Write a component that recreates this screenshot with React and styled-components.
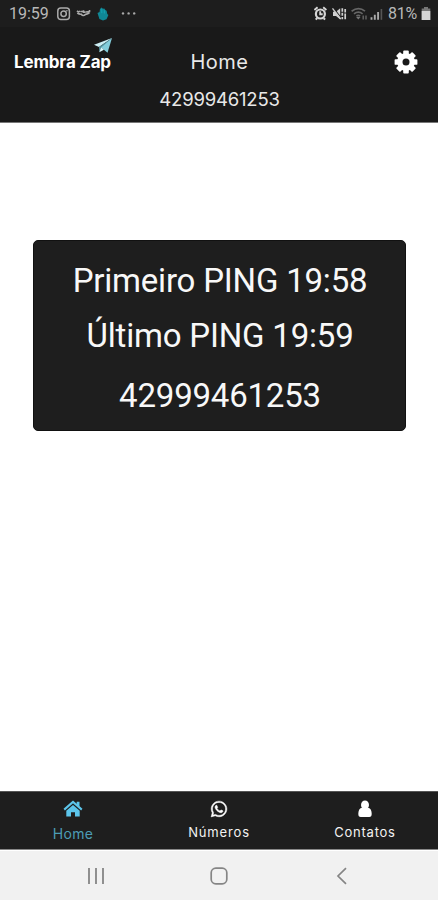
import React from 'react'

// Styling and Icons
import styled, { createGlobalStyle } from 'styled-components'
import { FaWhatsapp } from 'react-icons/fa'

const tabs = [
  { name: 'Home', icon: <HomeIcon />, active: true, spacing: '0.35px' },
  { name: 'Números', icon: <FaWhatsapp size={18} strokeWidth="14" stroke="#fff" />, spacing: '0.85px' },
  { name: 'Contatos', icon: <UserIcon />, spacing: '0.75px' },
]

const App = () => {
  return (
    <>
      <GlobalStyle />
      <Screen>
        <StatusBar>
          <Clock>19:59</Clock>
          <Notifications />
          <System>
            <SystemIcons />
            <span>81%</span>
            <BatteryIcon />
          </System>
        </StatusBar>
        <Header>
          <TitleRow>
            <Logo>
              <PlaneIcon />
              <LogoText>Lembra Zap</LogoText>
            </Logo>
            <Title>Home</Title>
            <Settings>
              <GearIcon />
            </Settings>
          </TitleRow>
          <Phone>42999461253</Phone>
        </Header>
        <Content>
          <Card>
            <PingLine $height="55px">Primeiro PING 19:58</PingLine>
            <PingLine $height="55px">Último PING 19:59</PingLine>
            <PingLine $height="66px">42999461253</PingLine>
          </Card>
        </Content>
        <TabBar>
          {tabs.map((tab) => (
            <Tab key={tab.name} $active={tab.active}>
              <TabIcon>{tab.icon}</TabIcon>
              <TabLabel $active={tab.active} $spacing={tab.spacing}>
                {tab.name}
              </TabLabel>
            </Tab>
          ))}
        </TabBar>
        <SystemNav>
          <svg width="18" height="18" viewBox="0 0 18 18" stroke="#858585" strokeWidth="1.8">
            <path d="M2 1v16M9 1v16M16 1v16" />
          </svg>
          <svg width="18" height="18" viewBox="0 0 18 18" fill="none" stroke="#858585" strokeWidth="1.7">
            <rect x="1.2" y="1.2" width="15.6" height="15.6" rx="4.6" />
          </svg>
          <svg width="18" height="18" viewBox="0 0 18 18" fill="none" stroke="#858585" strokeWidth="1.7">
            <path d="M13 1.2L5 9l8 7.8" />
          </svg>
        </SystemNav>
      </Screen>
    </>
  )
}

// Instagram, cap, hand and the overflow dots
const Notifications = () => (
  <svg width="84" height="16" viewBox="0 0 84 16" fill="none">
    <g stroke="#aaa" strokeWidth="1.5">
      <rect x="1.8" y="2" width="11.6" height="11.6" rx="3" />
      <circle cx="7.6" cy="7.8" r="2.7" />
    </g>
    <circle cx="10.9" cy="4.7" r="0.8" fill="#aaa" />
    <path
      d="M21 4.9q1.4 1.5 3.2.3M24.6 5.5h2.2M27.5 4.3v1.8h2.2M30 6l3.5-.5V4.1M21.3 7q2 1.4 4 1.2 1.8 2.5 4.2.2 2.5-.4 4-1.8"
      stroke="#aaa"
      strokeWidth="1.6"
    />
    <path d="M41.5 7l2-.9.5-3.1 1.6-1.4 1.3 1.2 1.4-.2 1 1.5 1.3.6.7 3.3 1.1.9-1.9 4.4-3.5 1.3-3.6-1.5z" fill="#108795" />
    <path d="M45.8 3.2v4M48.3 4.2v3.3" stroke="#14a5b4" strokeWidth="1" />
    <g fill="#aaa">
      <circle cx="67" cy="7.4" r="1.2" />
      <circle cx="72.6" cy="7.4" r="1.2" />
      <circle cx="78.2" cy="7.4" r="1.2" />
    </g>
  </svg>
)

// Alarm, muted sound, wifi and signal
const SystemIcons = () => (
  <svg width="72" height="16" viewBox="0 0 72 16" fill="none">
    <circle cx="6.4" cy="8" r="4.5" stroke="#d5d5d5" strokeWidth="2.2" />
    <path
      d="M.4 3.9l3.2-2.7M12.4 3.9L9.2 1.2M1.6 13.6l1.7-1.4M11.2 13.6l-1.7-1.4M6.2 5.3v3h2.5"
      stroke="#d5d5d5"
      strokeWidth="1.9"
    />
    <path d="M19 5.8h3l4.2-3.6v11.2L22 10h-3z" fill="#cfcfcf" />
    <path d="M19.4 1.9l8.2 10.6" stroke="#1d1d1d" strokeWidth="1.2" />
    <path d="M18.5 2.4l8.2 10.6" stroke="#cfcfcf" strokeWidth="1.3" />
    <path d="M28.3 2.2v3.5M28.3 6.8v3M28.3 11v2.2M31.2 3v3.5M31.2 7.6v5.6" stroke="#cfcfcf" strokeWidth="1.7" />
    <path d="M37.6 5.2q7-5.2 13.4 0M40 7.8q4.3-3.3 8.6 0M42.4 10.2q1.9-1.5 3.8 0" stroke="#666" strokeWidth="1.7" />
    <path d="M44.3 13.4l-2.2-2.4h4.4z" fill="#777" />
    <path d="M49.2 13.5V9.5M52 9.5v4" stroke="#666" strokeWidth="1.4" />
    <path d="M57.5 11.2v2.6M60.8 8.8v5M64.1 6.1v7.7" stroke="#aaa" strokeWidth="1.9" />
    <path d="M67.4 3v10.8" stroke="#555" strokeWidth="1.6" />
  </svg>
)

const BatteryIcon = () => (
  <svg width="10" height="15" viewBox="0 0 10 15">
    <path d="M3 1h4v1.6h2.3V14H.7V2.6H3z" fill="#777" />
    <path d="M.7 5h8.6v9H.7z" fill="#d5d5d5" />
  </svg>
)

const PlaneIcon = () => (
  <Plane width="20" height="17" viewBox="0 0 20 17">
    <path d="M19 1L1 7.7l5 2.3z" fill="#cdeff5" />
    <path d="M19 1L6 10l.3 5z" fill="#54929d" />
    <path d="M19 1L8.2 10.5l6.3 5.3z" fill="#83cddb" />
    <path d="M6.3 15.2l1.9-4.7 2.8 2.2z" fill="#d9f5f7" />
  </Plane>
)

const GearIcon = () => (
  <svg width="24" height="24" viewBox="0 0 24 24" fill="#fff">
    {[0, 45, 90, 135].map((angle) => (
      <rect key={angle} x="9.2" y="0.6" width="5.6" height="22.8" rx="0.9" transform={`rotate(${angle} 12 12)`} />
    ))}
    <circle cx="12" cy="12" r="8.9" />
    <circle cx="12" cy="12" r="3.5" fill="#191919" />
  </svg>
)

function HomeIcon() {
  return (
    <svg width="20" height="18" viewBox="0 0 20 18">
      <path d="M1.2 9.6L10 2l8.8 7.6" fill="none" stroke="currentColor" strokeWidth="2.1" />
      <path d="M13.7 1.7h2.8v5.4l-2.8-2.4z" fill="currentColor" />
      <path d="M10 5l6.7 5.7v5.8H12v-4.2H8v4.2H3.3v-5.8z" fill="currentColor" />
    </svg>
  )
}

function UserIcon() {
  return (
    <svg width="14" height="18" viewBox="0 0 14 18" fill="#fff">
      <ellipse cx="7" cy="4.9" rx="4" ry="4.3" />
      <path d="M3.6 7.7H10.4Q13.7 8.8 13.7 14q0 3-2.4 3H2.7Q.3 17 .3 14q0-5.2 3.3-6.3z" />
    </svg>
  )
}

const GlobalStyle = createGlobalStyle`
  * {
    box-sizing: border-box;
    margin: 0;
    padding: 0;
  }
  body {
    background: #fff;
  }
  svg {
    display: block;
    flex-shrink: 0;
  }
`

const Screen = styled.div`
  width: 438px;
  height: 900px;
  display: flex;
  flex-direction: column;
  overflow: hidden;
  font-family: Inter, sans-serif;
`

const StatusBar = styled.div`
  height: 27px;
  padding: 0 7px 0 9px;
  display: flex;
  align-items: center;
  background: #1d1d1d;
  color: #b8b8b8;
  font-family: Roboto, sans-serif;
  font-size: 16px;
  line-height: 27px;
`

const Clock = styled.span`
  width: 47px;
`

const System = styled.div`
  margin-left: auto;
  display: flex;
  align-items: center;
  gap: 2px;

  span {
    width: 31px;
    letter-spacing: -0.2px;
  }
`

const Header = styled.div`
  height: 96px;
  background: #191919;
  border-bottom: 1px solid #777;
  color: #e8e8e8;
`

const TitleRow = styled.div`
  height: 60px;
  padding: 10px 20px 0 14px;
  display: grid;
  grid-template-columns: 100px 1fr 100px;
`

const Logo = styled.div`
  display: flex;
  flex-direction: column;
`

const Plane = styled.svg`
  margin-left: 79px;
`

const LogoText = styled.span`
  margin-top: -3px;
  color: #fff;
  font-size: 17px;
  font-weight: 700;
  line-height: 22px;
  letter-spacing: -0.15px;
  white-space: nowrap;
`

const Title = styled.h1`
  padding-left: 7px;
  font-size: 20px;
  font-weight: 400;
  line-height: 50px;
  letter-spacing: 0.5px;
  text-align: center;
`

const Settings = styled.div`
  display: flex;
  justify-content: flex-end;
  padding-top: 13px;
`

const Phone = styled.p`
  padding-left: 1px;
  font-size: 18.5px;
  line-height: 25px;
  letter-spacing: -0.2px;
  text-align: center;
`

const Content = styled.div`
  flex: 1;
  padding: 117px 32px 0 33px;
`

const Card = styled.div`
  height: 191px;
  padding-top: 12px;
  border: 1px solid #111;
  border-radius: 5px;
  background: #1e1e1e;
`

const PingLine = styled.p`
  padding-left: 1px;
  color: #f8f8f8;
  font-family: Roboto, sans-serif;
  font-size: 33px;
  line-height: ${(props) => props.$height};
  letter-spacing: -0.2px;
  text-align: center;
  white-space: nowrap;
`

const TabBar = styled.div`
  height: 59px;
  display: grid;
  grid-template-columns: repeat(3, 1fr);
  border-top: 1px solid #555;
  border-bottom: 1px solid #888;
  background: #1e1e1e;
`

const Tab = styled.div`
  display: flex;
  flex-direction: column;
  align-items: center;
  padding-top: 7px;
  color: ${(props) => (props.$active ? '#5cc5eb' : '#fff')};
`

const TabIcon = styled.div`
  height: 20px;
  display: flex;
  align-items: center;
`

const TabLabel = styled.span`
  margin-top: ${(props) => (props.$active ? '6px' : '4px')};
  color: ${(props) => (props.$active ? '#4c9db6' : '#f2f2f2')};
  font-size: ${(props) => (props.$active ? '14px' : '13px')};
  letter-spacing: ${(props) => props.$spacing};
  line-height: 18px;
`

const SystemNav = styled.div`
  height: 50px;
  padding: 0 87px;
  display: flex;
  align-items: center;
  justify-content: space-between;
  border-top: 1px solid #fff;
  background: #f1f1f1;
`

export default App
